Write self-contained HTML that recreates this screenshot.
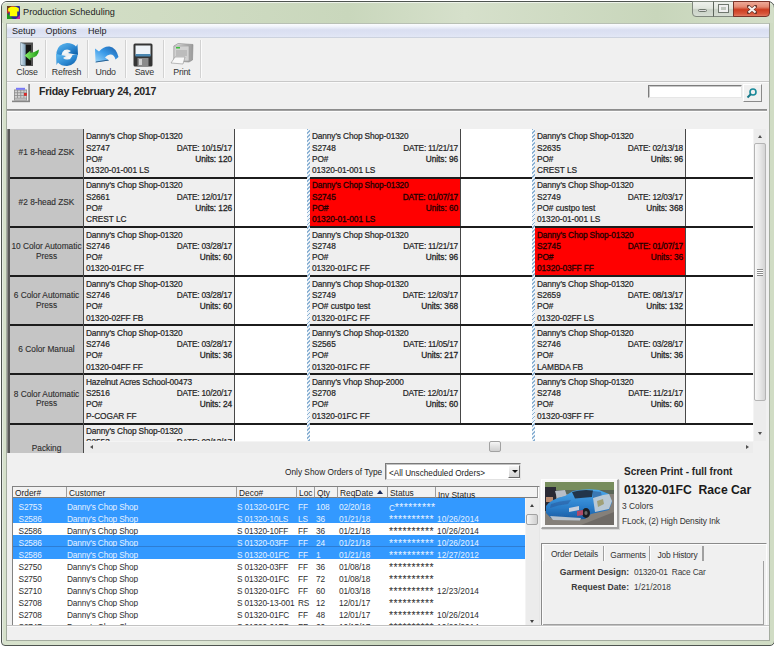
<!DOCTYPE html><html><head><meta charset="utf-8"><style>
*{margin:0;padding:0;box-sizing:border-box}
html,body{width:774px;height:648px;overflow:hidden;background:#fff;font-family:"Liberation Sans",sans-serif;color:#222}
.a{position:absolute}
.t{position:absolute;white-space:nowrap;font-size:8.3px;line-height:11px}
.sep{position:absolute;width:2px;border-left:1px solid #d2d2d2;border-right:1px solid #fbfbfb}
.card{position:absolute;background:#efefef;color:#252525;overflow:hidden;-webkit-text-stroke:0.2px currentColor}
.card.red{background:#ff0000;color:#240000;-webkit-text-stroke:0.3px currentColor}
.cl{position:absolute;left:2px;white-space:nowrap;font-size:8.3px;line-height:11px;letter-spacing:-0.06px}
.cr{position:absolute;right:2px;white-space:nowrap;font-size:8.3px;line-height:11px;letter-spacing:-0.06px}
.hdr{position:absolute;left:10px;width:73px;background:#c5c5c5;font-size:8.3px;line-height:9.5px;color:#2e2e2e;-webkit-text-stroke:0.12px currentColor;display:flex;align-items:center;justify-content:center;text-align:center;overflow:hidden}
.dash{position:absolute;width:3px;background:repeating-linear-gradient(135deg,#8cb2d4 0 1.3px,#eef4f9 1.3px 2.8px)}
.lr{position:absolute;left:13px;width:512px;height:12px;font-size:8.3px;line-height:12px;white-space:nowrap;color:#2e2e2e;overflow:hidden;letter-spacing:-0.15px}
.lr.sel{background:#3399ff;color:#e6f1ff}
.lr span{position:absolute;top:1.5px}
.lh{position:absolute;top:487px;height:11px;font-size:8.4px;line-height:11px;border-right:1px solid #9c9c9c;padding-left:2px;padding-top:1px;white-space:nowrap;color:#222;background:#f2f2f2;border-bottom:1px solid #7e7e7e}
</style></head><body>
<div class="a" style="left:1px;top:1px;width:774px;height:645px;border:1px solid #4e5450;border-radius:6px 7px 5px 4px;box-shadow:inset 1px 1px 0 #e6ebe4;background:linear-gradient(90deg,#d6e1cb 0%,#dde6d4 25%,#cbd8bf 50%,#d9e3cf 75%,#d0dcc4 100%)"></div>
<div class="a" style="left:2px;top:2px;width:771px;height:21px;border-top:1px solid #eef3ea;border-radius:5px 6px 0 0;background:linear-gradient(90deg,#d4dfc8 0%,#d0dcc3 20%,#c9d7bc 45%,#d6e0cb 60%,#c8d6bb 85%,#d3dec8 100%)"></div>
<svg class="a" style="left:7px;top:6px" width="13" height="13" viewBox="0 0 13 13">
<rect x="0" y="0" width="13" height="13" rx="1" fill="#2a2a9a"/>
<path d="M0 0 H8 L0 9 Z" fill="#c02828"/><path d="M0 0 H5 L0 4Z" fill="#6a3a1a"/>
<path d="M0 7 L6 13 H0 Z" fill="#1a9a1a"/><path d="M9 13 L13 9 V13 Z" fill="#c020a0"/>
<path d="M1.2 2.2 L4 0.8 H9 L11.8 2.2 L11.8 5.5 L10.2 5.5 L10.2 10.2 L2.8 10.2 L2.8 5.5 L1.2 5.5 Z" fill="#ffff00"/>
</svg>
<div class="t" style="left:23px;top:6px;font-size:9.2px;line-height:12px;color:#1e1e1e">Production Scheduling</div>
<div class="a" style="left:692px;top:1px;width:22px;height:16px;border:1px solid #7f877d;border-radius:0 0 0 4px;background:linear-gradient(#eef1ec 0%,#e0e5dd 45%,#c9d1c6 55%,#d6ddd3 100%)"></div>
<div class="a" style="left:698px;top:8.5px;width:9px;height:3.5px;background:#dcdcdc;border:1px solid #6f776e;border-radius:1.5px"></div>
<div class="a" style="left:713px;top:1px;width:21px;height:16px;border:1px solid #7f877d;border-left-color:#5d655c;background:linear-gradient(#eef1ec 0%,#e0e5dd 45%,#c9d1c6 55%,#d6ddd3 100%)"></div>
<div class="a" style="left:719px;top:5px;width:9px;height:7px;border:2px solid #f0f0f0;outline:1px solid #6f776e;background:#bfc6bd"></div>
<div class="a" style="left:733px;top:1px;width:37px;height:16px;border:1px solid #7a3328;border-radius:0 0 4px 0;background:linear-gradient(#eeaa98 0%,#e38a72 35%,#cc3c20 55%,#d9583c 85%,#e07a62 100%)"></div>
<svg class="a" style="left:747px;top:4.5px" width="10" height="9" viewBox="0 0 10 9"><path d="M1.5 1.5 L8.5 7.5 M8.5 1.5 L1.5 7.5" stroke="#6a3328" stroke-width="3.4" stroke-linecap="square"/><path d="M1.5 1.5 L8.5 7.5 M8.5 1.5 L1.5 7.5" stroke="#f6f2f0" stroke-width="2.2"/></svg>
<div class="a" style="left:6px;top:23px;width:764px;height:618px;background:#f0f0f0;border:1px solid #a4ac9f;border-top-color:#b8c0b4"></div>
<div class="a" style="left:7px;top:24px;width:762px;height:14px;border-bottom:1px solid #ccd2de;background:linear-gradient(#fbfcfe 0%,#f0f3fb 20%,#dadff1 45%,#dde2f3 75%,#e2e7f6 100%)"></div>
<div class="t" style="left:12px;top:25.5px;font-size:9px;line-height:11px;color:#1e1e1e">Setup</div>
<div class="t" style="left:45.5px;top:25.5px;font-size:9px;line-height:11px;color:#1e1e1e">Options</div>
<div class="t" style="left:88px;top:25.5px;font-size:9px;line-height:11px;color:#1e1e1e">Help</div>
<div class="sep" style="left:45px;top:40px;height:38px"></div>
<div class="sep" style="left:87px;top:40px;height:38px"></div>
<div class="sep" style="left:125px;top:40px;height:38px"></div>
<div class="sep" style="left:163px;top:40px;height:38px"></div>
<div class="sep" style="left:200px;top:40px;height:38px"></div>
<div class="t" style="left:2px;width:50px;text-align:center;top:66.5px;font-size:8.8px;line-height:11px;letter-spacing:-0.2px;color:#333">Close</div>
<div class="t" style="left:41.5px;width:50px;text-align:center;top:66.5px;font-size:8.8px;line-height:11px;letter-spacing:-0.2px;color:#333">Refresh</div>
<div class="t" style="left:80.7px;width:50px;text-align:center;top:66.5px;font-size:8.8px;line-height:11px;letter-spacing:-0.2px;color:#333">Undo</div>
<div class="t" style="left:119.30000000000001px;width:50px;text-align:center;top:66.5px;font-size:8.8px;line-height:11px;letter-spacing:-0.2px;color:#333">Save</div>
<div class="t" style="left:156.8px;width:50px;text-align:center;top:66.5px;font-size:8.8px;line-height:11px;letter-spacing:-0.2px;color:#333">Print</div>
<svg class="a" style="left:18px;top:40px" width="24" height="28" viewBox="0 0 24 28">
<defs><linearGradient id="dr" x1="0" x2="1"><stop offset="0" stop-color="#d6e6f2"/><stop offset="1" stop-color="#7fa0b8"/></linearGradient>
<linearGradient id="gr" x1="0" x2="1"><stop offset="0" stop-color="#8af06a"/><stop offset="1" stop-color="#1c9a14"/></linearGradient></defs>
<rect x="3" y="2.5" width="12" height="23.5" fill="#505050"/>
<rect x="6.5" y="5" width="6.5" height="20" fill="#151515"/>
<path d="M2.5 2.5 L7.5 4.5 L7.5 26 L2.5 25 Z" fill="url(#dr)" stroke="#6c8494" stroke-width="0.6"/>
<path d="M6.5 15.5 L12.5 10.5 L12.5 12.8 Q17.5 12 21 9.5 Q20.5 17.5 12.5 18 L12.5 20.5 Z" fill="url(#gr)"/>
</svg>
<svg class="a" style="left:55px;top:42px" width="24" height="25" viewBox="0 0 24 25">
<defs><linearGradient id="rf" x1="0" y1="0" x2="1" y2="1"><stop offset="0" stop-color="#62bdf2"/><stop offset="0.6" stop-color="#2a86d0"/><stop offset="1" stop-color="#0c5aa0"/></linearGradient></defs>
<path d="M1.5 10 Q3 2 12 1 Q18 1 21 4.5 L22.5 2 L23 13 L13 11 L16 9 Q13 6.5 9.5 8 Q7 9.5 6.5 13 L1.5 13 Z" fill="url(#rf)"/>
<path d="M22.5 14 Q21 23 12 24 Q6 24 3 20.5 L1.5 23 L1 12 L11 14 L8 16 Q11 18.5 14.5 17 Q17 15.5 17.5 13 L22.5 12 Z" fill="url(#rf)"/>
<path d="M7 12.5 L10 8 L13 10.5 Z" fill="#f4f8fb"/>
<path d="M11 15 L16.5 13 L15 17.5 Z" fill="#f4f8fb"/>
</svg>
<svg class="a" style="left:94px;top:45px" width="26" height="19" viewBox="0 0 26 19">
<defs><linearGradient id="ud" x1="0" y1="1" x2="1" y2="0"><stop offset="0" stop-color="#9fd8fa"/><stop offset="0.5" stop-color="#3a9ae8"/><stop offset="1" stop-color="#1a5ea8"/></linearGradient></defs>
<path d="M1.5 17.5 L1 3.5 L5 6.5 Q10 1 15.5 1.5 Q22 2.5 24.5 12 L21.5 14.5 Q20 9 16 9.5 Q13 10 11 12.5 L15 15.5 Z" fill="url(#ud)"/>
<path d="M1.5 17.5 L15 15.5 L14 14.8 L2 16.5 Z" fill="#10406e" opacity="0.8"/>
</svg>
<svg class="a" style="left:133px;top:43px" width="20" height="24" viewBox="0 0 20 24">
<rect x="0.5" y="0.5" width="19" height="23" rx="1.5" fill="#353535"/>
<rect x="2.5" y="2.5" width="15" height="10" fill="#eef3f8"/>
<rect x="2.5" y="11" width="15" height="2.5" fill="#4a86b0"/>
<rect x="4.5" y="15" width="11" height="8.5" fill="#8a8a8a"/>
<rect x="6" y="16" width="3" height="6" fill="#d0d0d0"/>
</svg>
<svg class="a" style="left:170px;top:43px" width="24" height="22" viewBox="0 0 24 22">
<defs><linearGradient id="pr" x1="0" x2="1"><stop offset="0" stop-color="#e6e6e6"/><stop offset="1" stop-color="#9a9a9a"/></linearGradient></defs>
<path d="M4 3 L8 0.5 L23 1.5 L22.5 17 L19 19 L4 18 Z" fill="url(#pr)" stroke="#8a8a8a" stroke-width="0.6"/>
<rect x="4" y="3" width="15" height="15" fill="#d2d2d2" stroke="#909090" stroke-width="0.5"/>
<rect x="6" y="4" width="4" height="1.5" fill="#3ac03a"/>
<rect x="6" y="7" width="11" height="6" fill="#bcbcbc"/>
<path d="M1 20 L5 14 L15 14 L13 21 Z" fill="#f8f8f8" stroke="#909090" stroke-width="0.6"/>
</svg>
<div class="a" style="left:7px;top:81px;width:762px;height:1px;background:#c8c8c8"></div>
<div class="a" style="left:7px;top:82px;width:762px;height:1px;background:#fafafa"></div>
<svg class="a" style="left:12px;top:83px" width="19" height="20" viewBox="0 0 19 20">
<rect x="16.3" y="1" width="1.6" height="18" fill="#858585"/>
<rect x="0" y="17.6" width="17.9" height="1.6" fill="#858585"/>
<rect x="2" y="6.5" width="13" height="11" fill="#8c8c8c"/>
<g fill="#d2d2d2"><rect x="2.8" y="7.5" width="2.4" height="1.9"/><rect x="6" y="7.5" width="2.4" height="1.9"/><rect x="9.2" y="7.5" width="2.4" height="1.9"/><rect x="12.3" y="7.5" width="2" height="1.9"/>
<rect x="2.8" y="10.2" width="2.4" height="1.9"/><rect x="6" y="10.2" width="2.4" height="1.9"/><rect x="9.2" y="10.2" width="2.4" height="1.9"/>
<rect x="2.8" y="12.9" width="2.4" height="1.9"/><rect x="6" y="12.9" width="2.4" height="1.9"/><rect x="9.2" y="12.9" width="2.4" height="1.9"/><rect x="12.3" y="12.9" width="2" height="1.9"/>
<rect x="2.8" y="15.5" width="11.5" height="1.2"/></g>
<rect x="4" y="4.8" width="9" height="2" fill="#7878f8"/>
<rect x="12" y="10" width="2.8" height="2.8" fill="#d82828"/>
</svg>
<div class="t" style="left:39px;top:86px;font-size:10.6px;line-height:11px;letter-spacing:-0.3px;font-weight:bold;color:#262626">Friday February 24, 2017</div>
<div class="a" style="left:648px;top:85px;width:94px;height:13px;background:#fff;border:1px solid #7c7c7c;border-right-color:#e6e6e6;border-bottom-color:#e6e6e6;box-shadow:inset 1px 1px 0 #c8c8c8"></div>
<div class="a" style="left:743px;top:84px;width:19px;height:18px;background:#f0f0f0;border:1px solid #fff;border-right-color:#8a8a8a;border-bottom-color:#8a8a8a"></div>
<svg class="a" style="left:746px;top:87px" width="12" height="12" viewBox="0 0 12 12">
<circle cx="7" cy="5" r="3" fill="none" stroke="#1a8a9a" stroke-width="1.6"/>
<path d="M5 7 L1.5 10.5" stroke="#1a7a8a" stroke-width="2"/>
</svg>
<div class="a" style="left:7px;top:109px;width:760px;height:2px;background:#a0a0a0;border-top:1px solid #8c8c8c"></div>
<div class="a" style="left:7px;top:111px;width:760px;height:1px;background:#fcfcfc"></div>
<div class="a" style="left:7px;top:129px;width:1px;height:324px;background:#8a8a88"></div>
<div class="a" style="left:8px;top:129px;width:2px;height:324px;background:#585858"></div>
<div class="a" style="left:84px;top:129px;width:669px;height:312px;background:#fff"></div>
<div class="hdr" style="top:129px;height:48px">#1 8-head ZSK</div>
<div class="card" style="left:84px;top:129px;width:150px;height:48px"><div class="cl" style="top:2.30px;letter-spacing:-0.12px">Danny's Chop Shop-01320</div><div class="cl" style="top:13.60px">S2747</div><div class="cr" style="top:13.60px;letter-spacing:-0.22px">DATE: 10/15/17</div><div class="cl" style="top:24.90px">PO#</div><div class="cr" style="top:24.90px"><b style="font-weight:normal;-webkit-text-stroke:0.28px currentColor">Units: 120</b></div><div class="cl" style="top:36.20px">01320-01-001 LS</div></div>
<div class="a" style="left:234px;top:129px;width:1px;height:48px;background:#484848"></div>
<div class="card" style="left:310px;top:129px;width:150px;height:48px"><div class="cl" style="top:2.30px;letter-spacing:-0.12px">Danny's Chop Shop-01320</div><div class="cl" style="top:13.60px">S2748</div><div class="cr" style="top:13.60px;letter-spacing:-0.22px">DATE: 11/21/17</div><div class="cl" style="top:24.90px">PO#</div><div class="cr" style="top:24.90px"><b style="font-weight:normal;-webkit-text-stroke:0.28px currentColor">Units: 96</b></div><div class="cl" style="top:36.20px">01320-01-001 LS</div></div>
<div class="a" style="left:460px;top:129px;width:1px;height:48px;background:#484848"></div>
<div class="card" style="left:535px;top:129px;width:150px;height:48px"><div class="cl" style="top:2.30px;letter-spacing:-0.12px">Danny's Chop Shop-01320</div><div class="cl" style="top:13.60px">S2635</div><div class="cr" style="top:13.60px;letter-spacing:-0.22px">DATE: 02/13/18</div><div class="cl" style="top:24.90px">PO#</div><div class="cr" style="top:24.90px"><b style="font-weight:normal;-webkit-text-stroke:0.28px currentColor">Units: 96</b></div><div class="cl" style="top:36.20px">CREST LS</div></div>
<div class="a" style="left:685px;top:129px;width:1px;height:48px;background:#484848"></div>
<div class="a" style="left:10px;top:177px;width:743px;height:2px;background:#1c1c1c"></div>
<div class="hdr" style="top:179px;height:47px">#2 8-head ZSK</div>
<div class="card" style="left:84px;top:179px;width:150px;height:47px"><div class="cl" style="top:1.40px;letter-spacing:-0.12px">Danny's Chop Shop-01320</div><div class="cl" style="top:12.70px">S2661</div><div class="cr" style="top:12.70px;letter-spacing:-0.22px">DATE: 12/01/17</div><div class="cl" style="top:24.00px">PO#</div><div class="cr" style="top:24.00px"><b style="font-weight:normal;-webkit-text-stroke:0.28px currentColor">Units: 126</b></div><div class="cl" style="top:35.30px">CREST LC</div></div>
<div class="a" style="left:234px;top:179px;width:1px;height:47px;background:#484848"></div>
<div class="card red" style="left:310px;top:179px;width:150px;height:47px"><div class="cl" style="top:1.40px;letter-spacing:-0.12px">Danny's Chop Shop-01320</div><div class="cl" style="top:12.70px">S2745</div><div class="cr" style="top:12.70px;letter-spacing:-0.22px">DATE: 01/07/17</div><div class="cl" style="top:24.00px">PO#</div><div class="cr" style="top:24.00px"><b style="font-weight:normal;-webkit-text-stroke:0.28px currentColor">Units: 60</b></div><div class="cl" style="top:35.30px">01320-01-001 LS</div></div>
<div class="a" style="left:460px;top:179px;width:1px;height:47px;background:#484848"></div>
<div class="card" style="left:535px;top:179px;width:150px;height:47px"><div class="cl" style="top:1.40px;letter-spacing:-0.12px">Danny's Chop Shop-01320</div><div class="cl" style="top:12.70px">S2749</div><div class="cr" style="top:12.70px;letter-spacing:-0.22px">DATE: 12/03/17</div><div class="cl" style="top:24.00px">PO# custpo test</div><div class="cr" style="top:24.00px"><b style="font-weight:normal;-webkit-text-stroke:0.28px currentColor">Units: 368</b></div><div class="cl" style="top:35.30px">01320-01-001 LS</div></div>
<div class="a" style="left:685px;top:179px;width:1px;height:47px;background:#484848"></div>
<div class="a" style="left:10px;top:226px;width:743px;height:2px;background:#1c1c1c"></div>
<div class="hdr" style="top:228px;height:47px">10 Color Automatic<br>Press</div>
<div class="card" style="left:84px;top:228px;width:150px;height:47px"><div class="cl" style="top:1.50px;letter-spacing:-0.12px">Danny's Chop Shop-01320</div><div class="cl" style="top:12.80px">S2746</div><div class="cr" style="top:12.80px;letter-spacing:-0.22px">DATE: 03/28/17</div><div class="cl" style="top:24.10px">PO#</div><div class="cr" style="top:24.10px"><b style="font-weight:normal;-webkit-text-stroke:0.28px currentColor">Units: 60</b></div><div class="cl" style="top:35.40px">01320-01FC FF</div></div>
<div class="a" style="left:234px;top:228px;width:1px;height:47px;background:#484848"></div>
<div class="card" style="left:310px;top:228px;width:150px;height:47px"><div class="cl" style="top:1.50px;letter-spacing:-0.12px">Danny's Chop Shop-01320</div><div class="cl" style="top:12.80px">S2748</div><div class="cr" style="top:12.80px;letter-spacing:-0.22px">DATE: 11/21/17</div><div class="cl" style="top:24.10px">PO#</div><div class="cr" style="top:24.10px"><b style="font-weight:normal;-webkit-text-stroke:0.28px currentColor">Units: 96</b></div><div class="cl" style="top:35.40px">01320-01FC FF</div></div>
<div class="a" style="left:460px;top:228px;width:1px;height:47px;background:#484848"></div>
<div class="card red" style="left:535px;top:228px;width:150px;height:47px"><div class="cl" style="top:1.50px;letter-spacing:-0.12px">Danny's Chop Shop-01320</div><div class="cl" style="top:12.80px">S2745</div><div class="cr" style="top:12.80px;letter-spacing:-0.22px">DATE: 01/07/17</div><div class="cl" style="top:24.10px">PO#</div><div class="cr" style="top:24.10px"><b style="font-weight:normal;-webkit-text-stroke:0.28px currentColor">Units: 36</b></div><div class="cl" style="top:35.40px">01320-03FF FF</div></div>
<div class="a" style="left:685px;top:228px;width:1px;height:47px;background:#484848"></div>
<div class="a" style="left:10px;top:275px;width:743px;height:2px;background:#1c1c1c"></div>
<div class="hdr" style="top:277px;height:47px">6 Color Automatic<br>Press</div>
<div class="card" style="left:84px;top:277px;width:150px;height:47px"><div class="cl" style="top:1.60px;letter-spacing:-0.12px">Danny's Chop Shop-01320</div><div class="cl" style="top:12.90px">S2746</div><div class="cr" style="top:12.90px;letter-spacing:-0.22px">DATE: 03/28/17</div><div class="cl" style="top:24.20px">PO#</div><div class="cr" style="top:24.20px"><b style="font-weight:normal;-webkit-text-stroke:0.28px currentColor">Units: 60</b></div><div class="cl" style="top:35.50px">01320-02FF FB</div></div>
<div class="a" style="left:234px;top:277px;width:1px;height:47px;background:#484848"></div>
<div class="card" style="left:310px;top:277px;width:150px;height:47px"><div class="cl" style="top:1.60px;letter-spacing:-0.12px">Danny's Chop Shop-01320</div><div class="cl" style="top:12.90px">S2749</div><div class="cr" style="top:12.90px;letter-spacing:-0.22px">DATE: 12/03/17</div><div class="cl" style="top:24.20px">PO# custpo test</div><div class="cr" style="top:24.20px"><b style="font-weight:normal;-webkit-text-stroke:0.28px currentColor">Units: 368</b></div><div class="cl" style="top:35.50px">01320-01FC FF</div></div>
<div class="a" style="left:460px;top:277px;width:1px;height:47px;background:#484848"></div>
<div class="card" style="left:535px;top:277px;width:150px;height:47px"><div class="cl" style="top:1.60px;letter-spacing:-0.12px">Danny's Chop Shop-01320</div><div class="cl" style="top:12.90px">S2659</div><div class="cr" style="top:12.90px;letter-spacing:-0.22px">DATE: 08/13/17</div><div class="cl" style="top:24.20px">PO#</div><div class="cr" style="top:24.20px"><b style="font-weight:normal;-webkit-text-stroke:0.28px currentColor">Units: 132</b></div><div class="cl" style="top:35.50px">01320-02FF LS</div></div>
<div class="a" style="left:685px;top:277px;width:1px;height:47px;background:#484848"></div>
<div class="a" style="left:10px;top:324px;width:743px;height:2px;background:#1c1c1c"></div>
<div class="hdr" style="top:326px;height:47px">6 Color Manual</div>
<div class="card" style="left:84px;top:326px;width:150px;height:47px"><div class="cl" style="top:1.70px;letter-spacing:-0.12px">Danny's Chop Shop-01320</div><div class="cl" style="top:13.00px">S2746</div><div class="cr" style="top:13.00px;letter-spacing:-0.22px">DATE: 03/28/17</div><div class="cl" style="top:24.30px">PO#</div><div class="cr" style="top:24.30px"><b style="font-weight:normal;-webkit-text-stroke:0.28px currentColor">Units: 36</b></div><div class="cl" style="top:35.60px">01320-04FF FF</div></div>
<div class="a" style="left:234px;top:326px;width:1px;height:47px;background:#484848"></div>
<div class="card" style="left:310px;top:326px;width:150px;height:47px"><div class="cl" style="top:1.70px;letter-spacing:-0.12px">Danny's Chop Shop-01320</div><div class="cl" style="top:13.00px">S2565</div><div class="cr" style="top:13.00px;letter-spacing:-0.22px">DATE: 11/05/17</div><div class="cl" style="top:24.30px">PO#</div><div class="cr" style="top:24.30px"><b style="font-weight:normal;-webkit-text-stroke:0.28px currentColor">Units: 217</b></div><div class="cl" style="top:35.60px">01320-01FC FF</div></div>
<div class="a" style="left:460px;top:326px;width:1px;height:47px;background:#484848"></div>
<div class="card" style="left:535px;top:326px;width:150px;height:47px"><div class="cl" style="top:1.70px;letter-spacing:-0.12px">Danny's Chop Shop-01320</div><div class="cl" style="top:13.00px">S2746</div><div class="cr" style="top:13.00px;letter-spacing:-0.22px">DATE: 03/28/17</div><div class="cl" style="top:24.30px">PO#</div><div class="cr" style="top:24.30px"><b style="font-weight:normal;-webkit-text-stroke:0.28px currentColor">Units: 36</b></div><div class="cl" style="top:35.60px">LAMBDA FB</div></div>
<div class="a" style="left:685px;top:326px;width:1px;height:47px;background:#484848"></div>
<div class="a" style="left:10px;top:373px;width:743px;height:2px;background:#1c1c1c"></div>
<div class="hdr" style="top:375px;height:48px">8 Color Automatic<br>Press</div>
<div class="card" style="left:84px;top:375px;width:150px;height:48px"><div class="cl" style="top:1.80px;letter-spacing:-0.12px">Hazelnut Acres School-00473</div><div class="cl" style="top:13.10px">S2516</div><div class="cr" style="top:13.10px;letter-spacing:-0.22px">DATE: 10/20/17</div><div class="cl" style="top:24.40px">PO#</div><div class="cr" style="top:24.40px"><b style="font-weight:normal;-webkit-text-stroke:0.28px currentColor">Units: 24</b></div><div class="cl" style="top:35.70px">P-COGAR FF</div></div>
<div class="a" style="left:234px;top:375px;width:1px;height:48px;background:#484848"></div>
<div class="card" style="left:310px;top:375px;width:150px;height:48px"><div class="cl" style="top:1.80px;letter-spacing:-0.12px">Danny's Vhop Shop-2000</div><div class="cl" style="top:13.10px">S2708</div><div class="cr" style="top:13.10px;letter-spacing:-0.22px">DATE: 12/01/17</div><div class="cl" style="top:24.40px">PO#</div><div class="cr" style="top:24.40px"><b style="font-weight:normal;-webkit-text-stroke:0.28px currentColor">Units: 60</b></div><div class="cl" style="top:35.70px">01320-01FC FF</div></div>
<div class="a" style="left:460px;top:375px;width:1px;height:48px;background:#484848"></div>
<div class="card" style="left:535px;top:375px;width:150px;height:48px"><div class="cl" style="top:1.80px;letter-spacing:-0.12px">Danny's Chop Shop-01320</div><div class="cl" style="top:13.10px">S2748</div><div class="cr" style="top:13.10px;letter-spacing:-0.22px">DATE: 11/21/17</div><div class="cl" style="top:24.40px">PO#</div><div class="cr" style="top:24.40px"><b style="font-weight:normal;-webkit-text-stroke:0.28px currentColor">Units: 60</b></div><div class="cl" style="top:35.70px">01320-03FF FF</div></div>
<div class="a" style="left:685px;top:375px;width:1px;height:48px;background:#484848"></div>
<div class="a" style="left:10px;top:423px;width:743px;height:2px;background:#1c1c1c"></div>
<div class="a" style="left:83px;top:129px;width:1px;height:324px;background:#4a4a4a"></div>
<div class="hdr" style="top:425px;height:28px;align-items:flex-start;padding-top:18.5px">Packing</div>
<div class="card" style="left:84px;top:425px;width:150px;height:16px"><div class="cl" style="top:0.90px;letter-spacing:-0.12px">Danny's Chop Shop-01320</div><div class="cl" style="top:12.20px">S2553</div><div class="cr" style="top:12.20px;letter-spacing:-0.22px">DATE: 03/13/17</div></div>
<div class="a" style="left:234px;top:425px;width:1px;height:16px;background:#3a3a3a"></div>
<div class="dash" style="left:306.5px;top:129px;height:312px"></div>
<div class="dash" style="left:531.5px;top:129px;height:312px"></div>
<div class="a" style="left:753px;top:129px;width:13px;height:312px;background:#ececec;border-left:1px solid #f4f4f4"></div>
<div class="a" style="left:757.5px;top:134.5px;width:0;height:0;border-left:2.5px solid transparent;border-right:2.5px solid transparent;border-bottom:3px solid #505050"></div>
<div class="a" style="left:757.5px;top:432px;width:0;height:0;border-left:2.5px solid transparent;border-right:2.5px solid transparent;border-top:3px solid #505050"></div>
<div class="a" style="left:754px;top:143px;width:12px;height:258px;border:1px solid #b4b4b4;border-radius:2px;background:linear-gradient(90deg,#f8f8f8,#e8e8e8 50%,#d4d4d4)"></div>
<div class="a" style="left:757px;top:269px;width:6px;height:7px;background:repeating-linear-gradient(#8a8a8a 0 1px,#fff 1px 2px)"></div>
<div class="a" style="left:84px;top:441px;width:669px;height:12px;background:#ececec;border-top:1px solid #f4f4f4"></div>
<div class="a" style="left:89.5px;top:444.5px;width:0;height:0;border-top:2.5px solid transparent;border-bottom:2.5px solid transparent;border-right:3px solid #505050"></div>
<div class="a" style="left:746px;top:444.5px;width:0;height:0;border-top:2.5px solid transparent;border-bottom:2.5px solid transparent;border-left:3px solid #505050"></div>
<div class="a" style="left:489px;top:441px;width:12px;height:11px;border:1px solid #a2a2a2;border-radius:2px;background:linear-gradient(#f6f6f6,#e2e2e2 50%,#d0d0d0)"></div>
<div class="a" style="left:753px;top:441px;width:13px;height:12px;background:#f0f0f0"></div>
<div class="t" style="left:285px;top:467px;font-size:8.3px;color:#222">Only Show Orders of Type</div>
<div class="a" style="left:385px;top:463px;width:136px;height:17px;background:#fff;border:1px solid #7a7a7a;border-right-color:#e2e2e2;border-bottom-color:#e2e2e2;box-shadow:inset 1px 1px 0 #c2c2c2"></div>
<div class="t" style="left:389px;top:468px;font-size:8.2px;color:#222">&lt;All Unscheduled Orders&gt;</div>
<div class="a" style="left:508px;top:465px;width:12px;height:13px;background:linear-gradient(#f6f6f6,#d2d2d2);border:1px solid #fff;border-right-color:#6a6a6a;border-bottom-color:#6a6a6a"></div>
<div class="a" style="left:511.5px;top:470px;width:0;height:0;border-left:3px solid transparent;border-right:3px solid transparent;border-top:3px solid #111"></div>
<div class="a" style="left:12px;top:486px;width:528px;height:140px;background:#fff;border:1px solid #828282;border-right-color:#e6e6e6"></div>
<div class="lh" style="left:13px;width:54px">Order#</div>
<div class="lh" style="left:67px;width:170px">Customer</div>
<div class="lh" style="left:237px;width:60px">Deco#</div>
<div class="lh" style="left:297px;width:18px">Loc</div>
<div class="lh" style="left:315px;width:23px">Qty</div>
<div class="lh" style="left:338px;width:50px">ReqDate</div>
<div class="lh" style="left:388px;width:48px">Status</div>
<div class="lh" style="left:436px;width:102px"><span style="position:relative;top:1.5px">Inv Status</span></div>
<div class="a" style="left:377px;top:490px;width:0;height:0;border-left:3.5px solid transparent;border-right:3.5px solid transparent;border-bottom:4px solid #1a2a5a"></div>
<div class="lr sel" style="top:498px;height:13px;padding-top:1px;"><span style="left:5.5px;top:2.5px;">S2753</span><span style="left:54px;top:2.5px;">Danny's Chop Shop</span><span style="left:224px;top:2.5px;">S 01320-01FC</span><span style="left:285px;top:2.5px;">FF</span><span style="left:303px;top:2.5px;">108</span><span style="left:326px;top:2.5px;">02/20/18</span><span style="left:376px;top:2.5px;">C<i style="font-style:normal;font-size:10.5px;letter-spacing:0.42px;position:relative;top:0.5px">*********</i></span><span style="left:424px;top:2.5px;letter-spacing:0.05px;"></span></div>
<div class="lr sel" style="top:511px;height:12px;"><span style="left:5.5px;">S2586</span><span style="left:54px;">Danny's Chop Shop</span><span style="left:224px;">S 01320-10LS</span><span style="left:285px;">LS</span><span style="left:303px;">36</span><span style="left:326px;">01/21/18</span><span style="left:376px;"><i style="font-style:normal;font-size:10.5px;letter-spacing:0.42px;position:relative;top:0.5px">**********</i></span><span style="left:424px;letter-spacing:0.05px;">10/26/2014</span></div>
<div class="lr" style="top:523px;height:12px;"><span style="left:5.5px;">S2586</span><span style="left:54px;">Danny's Chop Shop</span><span style="left:224px;">S 01320-10FF</span><span style="left:285px;">FF</span><span style="left:303px;">36</span><span style="left:326px;">01/21/18</span><span style="left:376px;"><i style="font-style:normal;font-size:10.5px;letter-spacing:0.42px;position:relative;top:0.5px">**********</i></span><span style="left:424px;letter-spacing:0.05px;">10/26/2014</span></div>
<div class="lr sel" style="top:535px;height:12px;"><span style="left:5.5px;">S2586</span><span style="left:54px;">Danny's Chop Shop</span><span style="left:224px;">S 01320-03FF</span><span style="left:285px;">FF</span><span style="left:303px;">24</span><span style="left:326px;">01/21/18</span><span style="left:376px;"><i style="font-style:normal;font-size:10.5px;letter-spacing:0.42px;position:relative;top:0.5px">**********</i></span><span style="left:424px;letter-spacing:0.05px;">10/26/2014</span></div>
<div class="lr sel" style="top:547px;height:12px;"><span style="left:5.5px;">S2586</span><span style="left:54px;">Danny's Chop Shop</span><span style="left:224px;">S 01320-01FC</span><span style="left:285px;">FF</span><span style="left:303px;">1</span><span style="left:326px;">01/21/18</span><span style="left:376px;"><i style="font-style:normal;font-size:10.5px;letter-spacing:0.42px;position:relative;top:0.5px">**********</i></span><span style="left:424px;letter-spacing:0.05px;">12/27/2012</span></div>
<div class="lr" style="top:559px;height:12px;"><span style="left:5.5px;">S2750</span><span style="left:54px;">Danny's Chop Shop</span><span style="left:224px;">S 01320-03FF</span><span style="left:285px;">FF</span><span style="left:303px;">36</span><span style="left:326px;">01/08/18</span><span style="left:376px;"><i style="font-style:normal;font-size:10.5px;letter-spacing:0.42px;position:relative;top:0.5px">**********</i></span><span style="left:424px;letter-spacing:0.05px;"></span></div>
<div class="lr" style="top:571px;height:12px;"><span style="left:5.5px;">S2750</span><span style="left:54px;">Danny's Chop Shop</span><span style="left:224px;">S 01320-01FC</span><span style="left:285px;">FF</span><span style="left:303px;">72</span><span style="left:326px;">01/08/18</span><span style="left:376px;"><i style="font-style:normal;font-size:10.5px;letter-spacing:0.42px;position:relative;top:0.5px">**********</i></span><span style="left:424px;letter-spacing:0.05px;"></span></div>
<div class="lr" style="top:583px;height:12px;"><span style="left:5.5px;">S2710</span><span style="left:54px;">Danny's Chop Shop</span><span style="left:224px;">S 01320-01FC</span><span style="left:285px;">FF</span><span style="left:303px;">60</span><span style="left:326px;">01/03/18</span><span style="left:376px;"><i style="font-style:normal;font-size:10.5px;letter-spacing:0.42px;position:relative;top:0.5px">**********</i></span><span style="left:424px;letter-spacing:0.05px;">12/23/2014</span></div>
<div class="lr" style="top:595px;height:12px;"><span style="left:5.5px;">S2708</span><span style="left:54px;">Danny's Chop Shop</span><span style="left:224px;">S 01320-13-001</span><span style="left:285px;">RS</span><span style="left:303px;">12</span><span style="left:326px;">12/01/17</span><span style="left:376px;"><i style="font-style:normal;font-size:10.5px;letter-spacing:0.42px;position:relative;top:0.5px">**********</i></span><span style="left:424px;letter-spacing:0.05px;"></span></div>
<div class="lr" style="top:607px;height:12px;"><span style="left:5.5px;">S2708</span><span style="left:54px;">Danny's Chop Shop</span><span style="left:224px;">S 01320-01FC</span><span style="left:285px;">FF</span><span style="left:303px;">48</span><span style="left:326px;">12/01/17</span><span style="left:376px;"><i style="font-style:normal;font-size:10.5px;letter-spacing:0.42px;position:relative;top:0.5px">**********</i></span><span style="left:424px;letter-spacing:0.05px;">10/26/2014</span></div>
<div class="lr" style="top:619px;height:6px;"><span style="left:5.5px;">S2747</span><span style="left:54px;">Danny's Chop Shop</span><span style="left:224px;">S 01320-01FC</span><span style="left:285px;">FF</span><span style="left:303px;">60</span><span style="left:326px;">10/15/17</span><span style="left:376px;"><i style="font-style:normal;font-size:10.5px;letter-spacing:0.42px;position:relative;top:0.5px">**********</i></span><span style="left:424px;letter-spacing:0.05px;">10/26/2014</span></div>
<div class="a" style="left:13px;top:546px;width:512px;height:1px;background:#2a6ab8;opacity:0.6"></div>
<div class="a" style="left:525px;top:498px;width:14px;height:127px;background:#ececec;border-left:1px solid #f4f4f4"></div>
<div class="a" style="left:529.5px;top:504px;width:0;height:0;border-left:2.5px solid transparent;border-right:2.5px solid transparent;border-bottom:3px solid #404040"></div>
<div class="a" style="left:529.5px;top:620px;width:0;height:0;border-left:2.5px solid transparent;border-right:2.5px solid transparent;border-top:3px solid #404040"></div>
<div class="a" style="left:526px;top:514px;width:12px;height:11px;border:1px solid #a2a2a2;border-radius:2px;background:linear-gradient(90deg,#f6f6f6,#e2e2e2 50%,#d0d0d0)"></div>
<div class="a" style="left:541px;top:479px;width:78px;height:50px;background:#f6f6f6;border:1px solid #fdfdfd;border-right:2px solid #a4a4a4;border-bottom:2px solid #a4a4a4;box-shadow:1px 1px 0 #d8d8d8"></div>
<svg class="a" style="left:545px;top:482px" width="69" height="43" viewBox="0 0 69 43">
<defs><filter id="bl" x="-5%" y="-5%" width="110%" height="110%"><feGaussianBlur stdDeviation="0.6"/></filter>
<linearGradient id="cb" x1="0" y1="0" x2="0" y2="1"><stop offset="0" stop-color="#4aa8ec"/><stop offset="0.6" stop-color="#2a7cc8"/><stop offset="1" stop-color="#1a5aa0"/></linearGradient></defs>
<g filter="url(#bl)">
<rect width="69" height="43" fill="#85807a"/>
<rect width="69" height="8" fill="#768c5c"/>
<path d="M0 8 H69 V12 H0Z" fill="#5a6658"/>
<path d="M36 43 L69 30 L69 43 Z" fill="#6e6a66"/>
<rect x="0" y="5" width="11" height="24" fill="#2c2c34"/>
<rect x="1" y="15" width="7" height="5" fill="#b88a70"/>
<path d="M10 9 L20 8 L22 14 L12 16 Z" fill="#b8bec8"/>
<path d="M1 24 Q6 17 20 14 L28 9 Q42 6 54 8 L64 12 L67 20 L64 28 L46 32 L40 37 L22 38 L6 36 L1 31 Z" fill="url(#cb)"/>
<path d="M27 10 Q38 7 48 8.5 L47 15 L30 16.5 Z" fill="#22364c"/>
<path d="M48 9 L56 10 L57 15 L48 16 Z" fill="#3a78b4"/>
<path d="M48 16 L58 13 L64 12 L67 19 L64 27 L50 30 Z" fill="#b8c8d6"/>
<path d="M52 19 L58 17 L59 22 L53 25 Z" fill="#a0a078"/>
<ellipse cx="41" cy="31" rx="4" ry="5" fill="#1e1e22"/>
<ellipse cx="41" cy="31" rx="1.6" ry="2" fill="#6a6a6a"/>
<path d="M24 26 L34 24 L34 28 L24 30 Z" fill="#c8d0dc"/>
<path d="M32 29 L38 28 L38 33 L32 34 Z" fill="#b04868"/>
<path d="M5 34 L36 36 L35 38.5 L8 38 Z" fill="#b8c2cc"/>
<path d="M6 22 Q14 19 26 18 L23 22 Q13 23 5 26 Z" fill="#2a5a9a" opacity="0.55"/>
</g>
</svg>
<div class="t" style="left:624px;top:465.5px;font-size:10px;line-height:12px;font-weight:bold;color:#262626">Screen Print - full front</div>
<div class="t" style="left:624px;top:483px;font-size:12.2px;line-height:14px;font-weight:bold;color:#1a1a1a">01320-01FC&nbsp; Race Car</div>
<div class="t" style="left:622px;top:501px;font-size:8.4px;color:#333">3 Colors</div>
<div class="t" style="left:622px;top:516px;font-size:8.4px;letter-spacing:-0.12px;color:#333">FLock, (2) High Density Ink</div>
<div class="a" style="left:541px;top:543px;width:226px;height:83px;border:1px solid #8a8a8a;border-right-color:#fcfcfc;border-bottom-color:#fcfcfc;box-shadow:inset 1px 1px 0 #fcfcfc"></div>
<div class="a" style="left:543px;top:561px;width:221px;height:64px;border-right:1px solid #a0a0a0;border-bottom:1px solid #a0a0a0"></div>
<div class="a" style="left:543px;top:546px;width:62px;height:15px;border-right:2px solid #a0a0a0;border-left:1px solid #fcfcfc"></div>
<div class="t" style="left:544px;width:61px;text-align:center;top:548.5px;font-size:8.4px;letter-spacing:-0.18px;color:#333">Order Details</div>
<div class="a" style="left:604px;top:546px;width:47px;height:15px;border-right:2px solid #a0a0a0;border-left:1px solid #fcfcfc"></div>
<div class="t" style="left:605px;width:46px;text-align:center;top:549.5px;font-size:8.4px;letter-spacing:-0.18px;color:#333">Garments</div>
<div class="a" style="left:650px;top:546px;width:54px;height:15px;border-right:2px solid #a0a0a0;border-left:1px solid #fcfcfc"></div>
<div class="t" style="left:651px;width:53px;text-align:center;top:549.5px;font-size:8.4px;letter-spacing:-0.18px;color:#333">Job History</div>
<div class="t" style="left:529px;width:100px;text-align:right;top:566.5px;font-size:8.6px;font-weight:bold;color:#3a3a3a">Garment Design:</div>
<div class="t" style="left:634px;top:566.5px;font-size:8.3px;letter-spacing:-0.18px;color:#3a3a3a">01320-01&nbsp; Race Car</div>
<div class="t" style="left:529px;width:100px;text-align:right;top:582px;font-size:8.6px;font-weight:bold;color:#3a3a3a">Request Date:</div>
<div class="t" style="left:634px;top:582px;font-size:8.3px;color:#3a3a3a">1/21/2018</div>
<div class="a" style="left:7px;top:625px;width:762px;height:1px;background:#c2c2c2"></div>
<div class="a" style="left:7px;top:626px;width:762px;height:1px;background:#fafafa"></div>
</body></html>
